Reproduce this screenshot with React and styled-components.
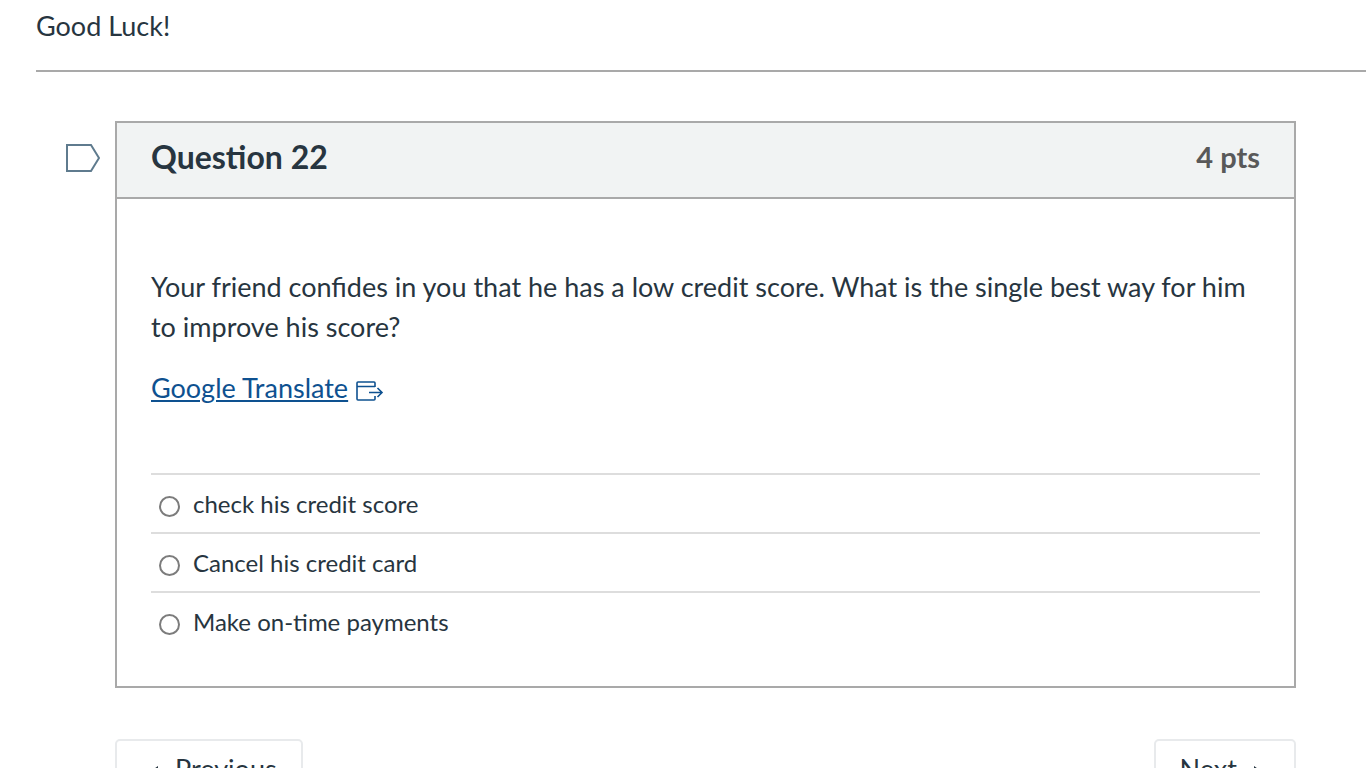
import React from 'react';
import styled, { createGlobalStyle } from 'styled-components';

const GlobalStyle = createGlobalStyle`
  * { box-sizing: border-box; }
  html { scrollbar-width: none; }
  body {
    margin: 0;
    background: #fff;
    color: #273540;
    font-family: Lato, "Liberation Sans", sans-serif;
    font-size: 27px;
    line-height: 40px;
  }
`;

const Page = styled.div`
  padding: 6px 0 40px 36px;
`;

const Instructions = styled.header`
  padding-bottom: 24px;
  border-bottom: 2px solid #a9a9a9;
  p { margin: 0; }
`;

const Quiz = styled.main`
  margin: 49px 70px 0 28px;
`;

const QuestionRow = styled.div`
  display: flex;
  align-items: flex-start;
`;

const FlagButton = styled.button`
  flex: none;
  width: 51px;
  height: 32px;
  margin-top: 21px;
  padding: 0;
  border: 0;
  background: none;
  text-align: left;
  svg { display: block; }
`;

const Card = styled.section`
  flex: 1;
  min-width: 0;
  border: 2px solid #a9a9a9;
`;

const CardHeader = styled.div`
  display: flex;
  align-items: center;
  justify-content: space-between;
  height: 76px;
  padding: 0 34px 6px;
  border-bottom: 2px solid #a9a9a9;
  background: #f1f3f3;
`;

const Title = styled.h2`
  margin: 0;
  font-size: 32px;
  font-weight: 700;
`;

const Points = styled.span`
  color: #595959;
  font-size: 29px;
  font-weight: 700;
`;

const CardBody = styled.div`
  padding: 68px 34px 36px;
`;

const Prompt = styled.p`
  margin: 0 0 21px;
`;

const ExternalLink = styled.a`
  display: inline-flex;
  align-items: center;
  gap: 7px;
  color: #0e5190;
  text-decoration: none;
  span { text-decoration: underline; }
  svg { margin-top: 5px; }
`;

const Answers = styled.fieldset`
  margin: 65px 0 0;
  padding: 0;
  border: 0;
`;

const Answer = styled.label`
  display: flex;
  align-items: center;
  gap: 13px;
  height: 59px;
  padding: 0 8px;
  border-top: 2px solid #dddddd;
  font-size: 24px;
`;

const Radio = styled.input`
  appearance: none;
  flex: none;
  width: 21px;
  height: 21px;
  margin: 5px 0 0;
  border: 2px solid #7c7c7c;
  border-radius: 50%;
  background: #fff;
  &:checked { box-shadow: inset 0 0 0 3px #fff; background: #0e5190; }
`;

const Pager = styled.nav`
  display: flex;
  justify-content: space-between;
  margin: 51px 0 0 51px;
`;

const PagerButton = styled.button`
  display: flex;
  align-items: center;
  gap: 16px;
  height: 64px;
  padding: 0 ${p => (p.$forward ? '33px 4px 24px' : '24px 4px 34px')};
  border: 2px solid #e8eaec;
  border-radius: 5px;
  background: #fff;
  color: #273540;
  font: inherit;
  svg { margin-top: 3px; }
`;

const options = ['check his credit score', 'Cancel his credit card', 'Make on-time payments'];

function FlagIcon() {
  return (
    <svg width="36" height="30" viewBox="0 0 36 30" fill="none" stroke="#5f7b8e" strokeWidth="2" aria-hidden="true">
      <path d="M3 2H27L35 15L27 28H3Z" />
    </svg>
  );
}

function ExternalIcon() {
  return (
    <svg width="29" height="22" viewBox="0 0 29 22" fill="none" stroke="currentColor" strokeWidth="1.6" aria-hidden="true">
      <path d="M20 7V3Q20 2 19 2H3Q2 2 2 3V19Q2 20 3 20H19Q20 20 20 19V16M2 6.5H20M14 12.5H27M22.5 8L27 12.5L22.5 17" />
    </svg>
  );
}

function Arrow({ forward }) {
  return (
    <svg width="8" height="12" viewBox="0 0 8 12" fill="currentColor" aria-hidden="true">
      <path d={forward ? 'M1 1L8 6L1 11Z' : 'M7 1L0 6L7 11Z'} />
    </svg>
  );
}

export default function App() {
  return (
    <>
      <GlobalStyle />
      <Page>
        <Instructions><p>Good Luck!</p></Instructions>
        <Quiz>
          <QuestionRow>
            <FlagButton type="button" aria-label="Flag question"><FlagIcon /></FlagButton>
            <Card>
              <CardHeader>
                <Title>Question 22</Title>
                <Points>4 pts</Points>
              </CardHeader>
              <CardBody>
                <Prompt id="prompt">
                  Your friend confides in you that he has a low credit score. What is the single best way for him to improve his score?
                </Prompt>
                <ExternalLink href="#translate"><span>Google Translate</span><ExternalIcon /></ExternalLink>
                <Answers aria-labelledby="prompt">
                  {options.map((text, i) => (
                    <Answer key={text} htmlFor={`answer-${i}`}>
                      <Radio type="radio" name="answer" id={`answer-${i}`} />
                      <span>{text}</span>
                    </Answer>
                  ))}
                </Answers>
              </CardBody>
            </Card>
          </QuestionRow>
          <Pager>
            <PagerButton type="button"><Arrow /><span>Previous</span></PagerButton>
            <PagerButton type="button" $forward><span>Next</span><Arrow forward /></PagerButton>
          </Pager>
        </Quiz>
      </Page>
    </>
  );
}
